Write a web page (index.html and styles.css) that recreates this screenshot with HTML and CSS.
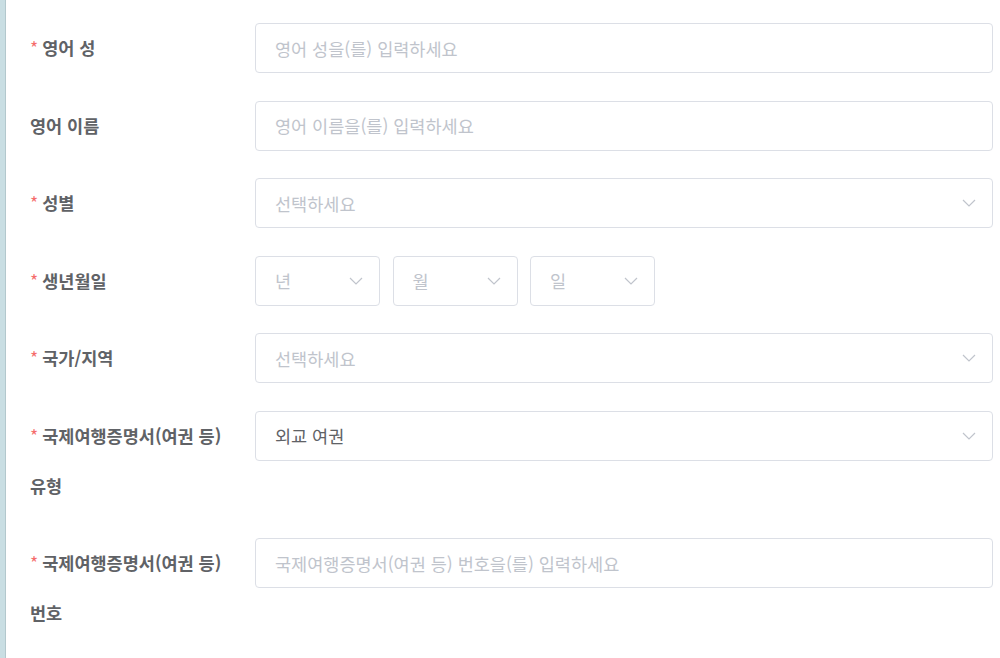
FILE: index.html
```html
<!DOCTYPE html>
<html lang="ko">
<head>
<meta charset="utf-8">
<link rel="stylesheet" href="styles.css">
</head>
<body>
<div class="page">
  <div class="strip"></div>
  <form class="form">
    <div class="item">
      <label class="label required">영어 성</label>
      <div class="control"><div class="input placeholder">영어 성을(를) 입력하세요</div></div>
    </div>
    <div class="item">
      <label class="label">영어 이름</label>
      <div class="control"><div class="input placeholder">영어 이름을(를) 입력하세요</div></div>
    </div>
    <div class="item">
      <label class="label required">성별</label>
      <div class="control"><div class="input select placeholder"><span>선택하세요</span><svg class="chev" viewBox="0 0 14 8"><path d="M1 1 L7 7 L13 1"/></svg></div></div>
    </div>
    <div class="item">
      <label class="label required">생년월일</label>
      <div class="control dates">
        <div class="input select small placeholder"><span>년</span><svg class="chev" viewBox="0 0 14 8"><path d="M1 1 L7 7 L13 1"/></svg></div>
        <div class="input select small placeholder"><span>월</span><svg class="chev" viewBox="0 0 14 8"><path d="M1 1 L7 7 L13 1"/></svg></div>
        <div class="input select small placeholder"><span>일</span><svg class="chev" viewBox="0 0 14 8"><path d="M1 1 L7 7 L13 1"/></svg></div>
      </div>
    </div>
    <div class="item">
      <label class="label required">국가/지역</label>
      <div class="control"><div class="input select placeholder"><span>선택하세요</span><svg class="chev" viewBox="0 0 14 8"><path d="M1 1 L7 7 L13 1"/></svg></div></div>
    </div>
    <div class="item">
      <label class="label required">국제여행증명서(여권 등) 유형</label>
      <div class="control"><div class="input select"><span>외교 여권</span><svg class="chev" viewBox="0 0 14 8"><path d="M1 1 L7 7 L13 1"/></svg></div></div>
    </div>
    <div class="item">
      <label class="label required">국제여행증명서(여권 등) 번호</label>
      <div class="control"><div class="input placeholder">국제여행증명서(여권 등) 번호을(를) 입력하세요</div></div>
    </div>
  </form>
</div>
</body>
</html>
```
FILE: styles.css
```css
html, body {
  margin: 0;
  padding: 0;
  background: #fff;
}
body {
  font-family: "Noto Sans CJK KR", "Noto Sans", sans-serif;
  font-size: 17.5px;
  color: #606266;
}
.page {
  display: flex;
  min-height: 658px;
}
.strip {
  width: 5px;
  background: #c9dee3;
  border-right: 1px solid #b3c8cd;
  flex: none;
}
.form {
  flex: 1;
  padding: 23px 7px 0 24px;
  box-sizing: border-box;
}
.item {
  display: flex;
  margin-bottom: 27.5px;
}
.label {
  width: 225px;
  flex: none;
  box-sizing: border-box;
  padding-right: 12px;
  line-height: 50px;
  font-weight: 700;
  color: #606266;
  word-break: keep-all;
}
.label.required::before {
  content: "*";
  color: #f56c6c;
  margin-right: 4px;
  font-weight: 400;
}
.control {
  flex: 1;
}
.dates {
  display: flex;
  gap: 12.5px;
}
.input {
  height: 50px;
  box-sizing: border-box;
  border: 1px solid #dcdfe6;
  border-radius: 4px;
  padding: 0 19px;
  display: flex;
  align-items: center;
  color: #606266;
}
.placeholder {
  color: #c0c4cc;
}
.select {
  justify-content: space-between;
  padding-right: 16px;
}
.small {
  width: 125px;
}
.chev {
  width: 14px;
  height: 8px;
  fill: none;
  stroke: #c0c4cc;
  stroke-width: 1.2;
}
```
